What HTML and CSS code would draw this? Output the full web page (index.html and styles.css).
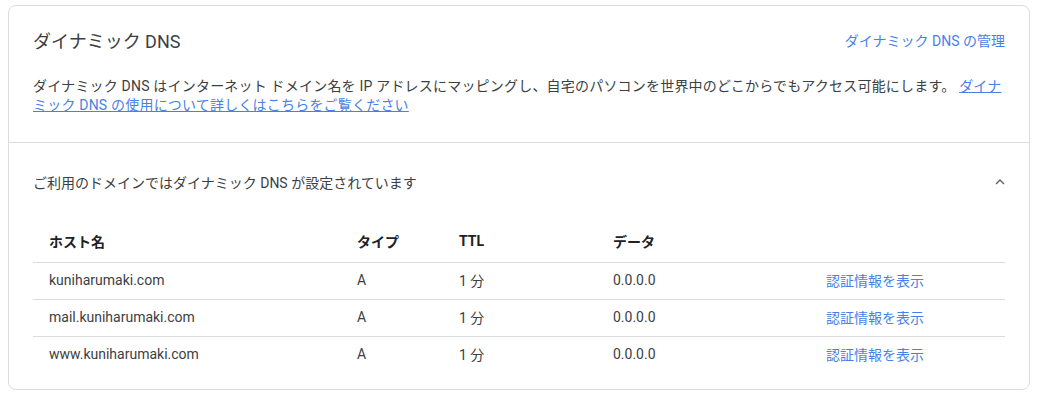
FILE: index.html
```html
<!DOCTYPE html>
<html lang="ja">
<head>
    <meta charset="UTF-8">
    <meta name="viewport" content="width=device-width, initial-scale=1.0">
    <title>ダイナミック DNS</title>
    <link rel="stylesheet" href="styles.css">
</head>
<body>
    <div class="card">
        <div class="card-head">
            <div class="title-row">
                <h2 class="title">ダイナミック DNS</h2>
                <a class="manage-link" href="#">ダイナミック DNS の管理</a>
            </div>
            <p class="desc">
                ダイナミック DNS はインターネット ドメイン名を IP アドレスにマッピングし、自宅のパソコンを世界中のどこからでもアクセス可能にします。 <a href="#">ダイナミック DNS の使用について詳しくはこちらをご覧ください</a>
            </p>
        </div>

        <div class="section">
            <div class="section-head">
                <span>ご利用のドメインではダイナミック DNS が設定されています</span>
                <svg class="chevron" viewBox="0 0 24 24" width="18" height="18">
                    <path d="M12 8l-6 6 1.41 1.41L12 10.83l4.59 4.58L18 14z" fill="#5f6368"/>
                </svg>
            </div>

            <table class="dns-table">
                <colgroup>
                    <col style="width: 308px">
                    <col style="width: 102px">
                    <col style="width: 154px">
                    <col style="width: 213px">
                    <col>
                </colgroup>
                <thead>
                    <tr>
                        <th>ホスト名</th>
                        <th>タイプ</th>
                        <th>TTL</th>
                        <th>データ</th>
                        <th></th>
                    </tr>
                </thead>
                <tbody>
                    <tr>
                        <td>kuniharumaki.com</td>
                        <td>A</td>
                        <td>1 分</td>
                        <td>0.0.0.0</td>
                        <td><a href="#">認証情報を表示</a></td>
                    </tr>
                    <tr>
                        <td>mail.kuniharumaki.com</td>
                        <td>A</td>
                        <td>1 分</td>
                        <td>0.0.0.0</td>
                        <td><a href="#">認証情報を表示</a></td>
                    </tr>
                    <tr>
                        <td>www.kuniharumaki.com</td>
                        <td>A</td>
                        <td>1 分</td>
                        <td>0.0.0.0</td>
                        <td><a href="#">認証情報を表示</a></td>
                    </tr>
                </tbody>
            </table>
        </div>
    </div>
</body>
</html>
```

FILE: styles.css
```css
body {
    margin: 0;
    padding: 5px 12px 0 8px;
    font-family: Roboto, "Noto Sans CJK JP", sans-serif;
    font-size: 14px;
    color: #3c4043;
    background-color: #fff;
}
a {
    color: #4a7fe6;
    text-decoration: none;
}
.card {
    border: 1px solid #dadce0;
    border-radius: 8px;
    height: 385px;
    box-sizing: border-box;
}
.card-head {
    padding: 22px 24px 27px 24px;
    border-bottom: 1px solid #dadce0;
}
.title-row {
    display: flex;
    justify-content: space-between;
    align-items: center;
    height: 24px;
}
.title {
    margin: 0;
    font-size: 18px;
    font-weight: 400;
    color: #3c4043;
}
.manage-link {
    font-size: 14px;
}
.desc {
    margin: 25px 0 0 0;
    line-height: 19px;
    letter-spacing: 0.2px;
}
.desc a {
    text-decoration: underline;
}
.section {
    padding: 0 24px;
}
.section-head {
    display: flex;
    justify-content: space-between;
    align-items: center;
    height: 77px;
}
.chevron {
    margin-right: -4px;
}
.dns-table {
    width: 100%;
    border-collapse: collapse;
    margin-top: 5px;
    table-layout: fixed;
}
.dns-table th {
    text-align: left;
    font-weight: 700;
    color: #202124;
    padding: 0 16px 5px 16px;
    height: 32px;
    border-bottom: 1px solid #dadce0;
}
.dns-table td {
    padding: 0 16px 2px 16px;
    height: 34px;
    border-bottom: 1px solid #dadce0;
}
.dns-table tbody tr:last-child td {
    border-bottom: none;
}
```
